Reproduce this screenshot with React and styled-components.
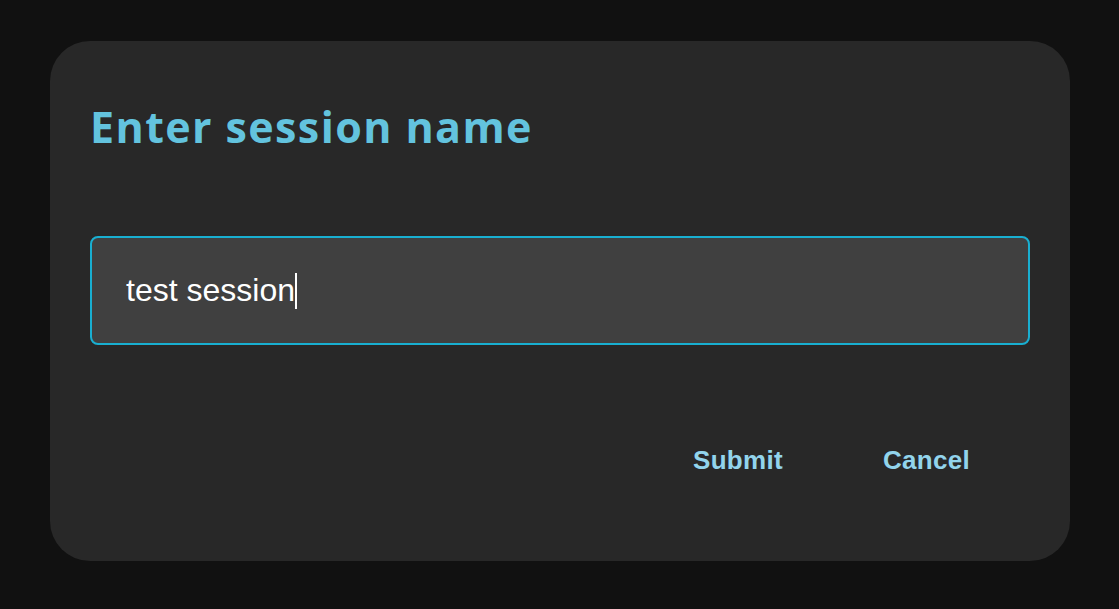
import React from "react";
import styled, { createGlobalStyle } from "styled-components";

const GlobalStyle = createGlobalStyle`
  html, body {
    margin: 0;
    padding: 0;
    background: #111111;
  }
  #root {
    padding: 41px 49px 48px 50px;
  }
`;

const Dialog = styled.div`
  width: 1020px;
  height: 520px;
  box-sizing: border-box;
  background: #282828;
  border-radius: 40px;
  padding: 57px 40px 0 40px;
  display: flex;
  flex-direction: column;
`;

const Title = styled.h2`
  margin: 0;
  font-family: "Open Sans", "Noto Sans", sans-serif;
  font-weight: 700;
  font-size: 43px;
  letter-spacing: 1.4px;
  line-height: 57px;
  color: #63c3de;
`;

const Field = styled.div`
  margin-top: 81px;
  height: 109px;
  box-sizing: border-box;
  border: 2px solid #19afd1;
  border-radius: 8px;
  background: #404040;
  padding-left: 34px;
  display: flex;
  align-items: center;
  font-family: "Liberation Sans", Arial, sans-serif;
  font-size: 32px;
  color: #ffffff;
`;

const Caret = styled.span`
  display: inline-block;
  width: 2px;
  height: 36px;
  background: #ffffff;
`;

const Actions = styled.div`
  margin-top: 88px;
  display: flex;
  justify-content: flex-end;
  gap: 40px;
  padding-right: 30px;
`;

const TextButton = styled.button`
  border: none;
  background: transparent;
  padding: 12px 30px;
  height: 50px;
  font-family: "Liberation Sans", Arial, sans-serif;
  font-weight: 700;
  font-size: 26px;
  letter-spacing: 0.3px;
  color: #92d4ec;
  cursor: pointer;
`;

export default function App() {
  return (
    <>
      <GlobalStyle />
      <Dialog>
        <Title>Enter session name</Title>
        <Field>
          test session
          <Caret />
        </Field>
        <Actions>
          <TextButton>Submit</TextButton>
          <TextButton>Cancel</TextButton>
        </Actions>
      </Dialog>
    </>
  );
}
